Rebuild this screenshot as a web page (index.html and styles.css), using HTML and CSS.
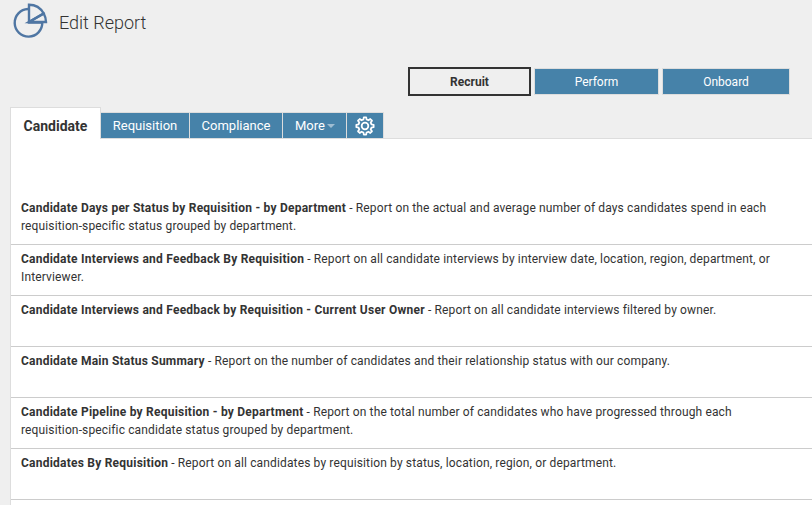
FILE: index.html
```html
<!DOCTYPE html>
<html lang="en">
<head>
    <meta charset="UTF-8">
    <title>Edit Report</title>
    <link rel="stylesheet" href="styles.css">
</head>
<body>
    <div class="header">
        <svg class="header-icon" width="36" height="40" viewBox="0 0 36 40" fill="none" stroke="#4f76a3" stroke-width="2.4">
            <path d="M16 6 A13.8 13.8 0 1 0 30.3 19.5 H16.5"/>
            <path d="M17 19 V1.8 A17 17 0 0 1 31.7 10.5 Z"/>
            <path d="M17 19 L31.7 10.5 A17 17 0 0 1 34 19 Z"/>
        </svg>
        <h1>Edit Report</h1>
    </div>

    <!-- Product buttons -->
    <div class="products">
        <button class="product active">Recruit</button>
        <button class="product">Perform</button>
        <button class="product product-last">Onboard</button>
    </div>

    <!-- Tabs -->
    <div class="tabs">
        <div class="tab active">Candidate</div>
        <div class="tab tab-req">Requisition</div>
        <div class="tab tab-comp">Compliance</div>
        <div class="tab tab-more">More<span class="caret"></span></div>
        <div class="tab tab-gear">
            <svg width="20" height="20" viewBox="0 0 24 24" fill="none" stroke="#fff" stroke-width="2.1" stroke-linejoin="round">
                <circle cx="12" cy="12" r="4"/>
                <path d="M10.06 4.24 10.54 1.6 13.46 1.6 13.94 4.24 16.12 5.14 18.32 3.61 20.39 5.68 18.86 7.88 19.76 10.06 22.4 10.54 22.4 13.46 19.76 13.94 18.86 16.12 20.39 18.32 18.32 20.39 16.12 18.86 13.94 19.76 13.46 22.4 10.54 22.4 10.06 19.76 7.88 18.86 5.68 20.39 3.61 18.32 5.14 16.12 4.24 13.94 1.6 13.46 1.6 10.54 4.24 10.06 5.14 7.88 3.61 5.68 5.68 3.61 7.88 5.14 Z"/>
            </svg>
        </div>
    </div>

    <!-- Report list -->
    <div class="panel">
        <div class="report"><b>Candidate Days per Status by Requisition - by Department</b> - Report on the actual and average number of days candidates spend in each requisition-specific status grouped by department.</div>
        <div class="report"><b>Candidate Interviews and Feedback By Requisition</b> - Report on all candidate interviews by interview date, location, region, department, or Interviewer.</div>
        <div class="report"><b>Candidate Interviews and Feedback by Requisition - Current User Owner</b> - Report on all candidate interviews filtered by owner.</div>
        <div class="report"><b>Candidate Main Status Summary</b> - Report on the number of candidates and their relationship status with our company.</div>
        <div class="report"><b>Candidate Pipeline by Requisition - by Department</b> - Report on the total number of candidates who have progressed through each requisition-specific candidate status grouped by department.</div>
        <div class="report"><b>Candidates By Requisition</b> - Report on all candidates by requisition by status, location, region, or department.</div>
    </div>
</body>
</html>
```

FILE: styles.css
```css
* { margin: 0; padding: 0; box-sizing: border-box; }
html, body { height: 505px; overflow: hidden; }
body { font-family: Roboto, Arial, sans-serif; background: #efefef; color: #333; padding-left: 10px; font-size: 12px; }
.header { display: flex; align-items: center; height: 46px; margin-left: 2px; }
.header-icon { margin-right: 10px; }
.header h1 { font-size: 18px; font-weight: 300; color: #333; line-height: 46px; margin-left: 1px; }
.products { display: flex; gap: 3px; justify-content: flex-end; align-items: center; padding-right: 22px; margin-top: 21px; height: 29px; margin-bottom: 11px; }
.product { width: 125px; height: 27px; background: #4682a9; color: #fff; border: 1px solid #ddd; font-family: Roboto, Arial, sans-serif; font-size: 12px; }
.product.active { width: 123px; height: 29px; background: #efefef; color: #333; border: 2px solid #333; font-weight: 700; }
.product-last { width: 128px; }
.tabs { display: flex; align-items: flex-end; height: 32px; position: relative; z-index: 1; margin-bottom: -1px; }
.tab { height: 27px; background: #4682a9; color: #fff; font-size: 13px; border: 1px solid #ddd; border-left: 0; display: flex; align-items: center; justify-content: center; }
.tab.active { width: 91px; height: 32px; background: #fff; color: #333; font-size: 14px; font-weight: 700; border: 1px solid #ddd; border-bottom: 0; padding-top: 4px; }
.tab-req { width: 89px; }
.tab-comp { width: 93px; }
.tab-more { width: 64px; justify-content: flex-start; padding-left: 12px; }
.tab-gear { width: 37px; }
.caret { width: 0; height: 0; margin-left: 2px; border: 4px solid transparent; border-top: 4px solid #9fbdd2; border-bottom: 0; }
.panel { background: #fff; border: 1px solid #ddd; border-right: 0; border-bottom: 0; padding-top: 55px; height: 367px; }
.report { height: 51px; padding: 5px 20px 0 10px; line-height: 18px; letter-spacing: 0.14px; border-bottom: 1px solid #ccc; }
.report b { font-weight: 700; letter-spacing: 0.23px; }
```
